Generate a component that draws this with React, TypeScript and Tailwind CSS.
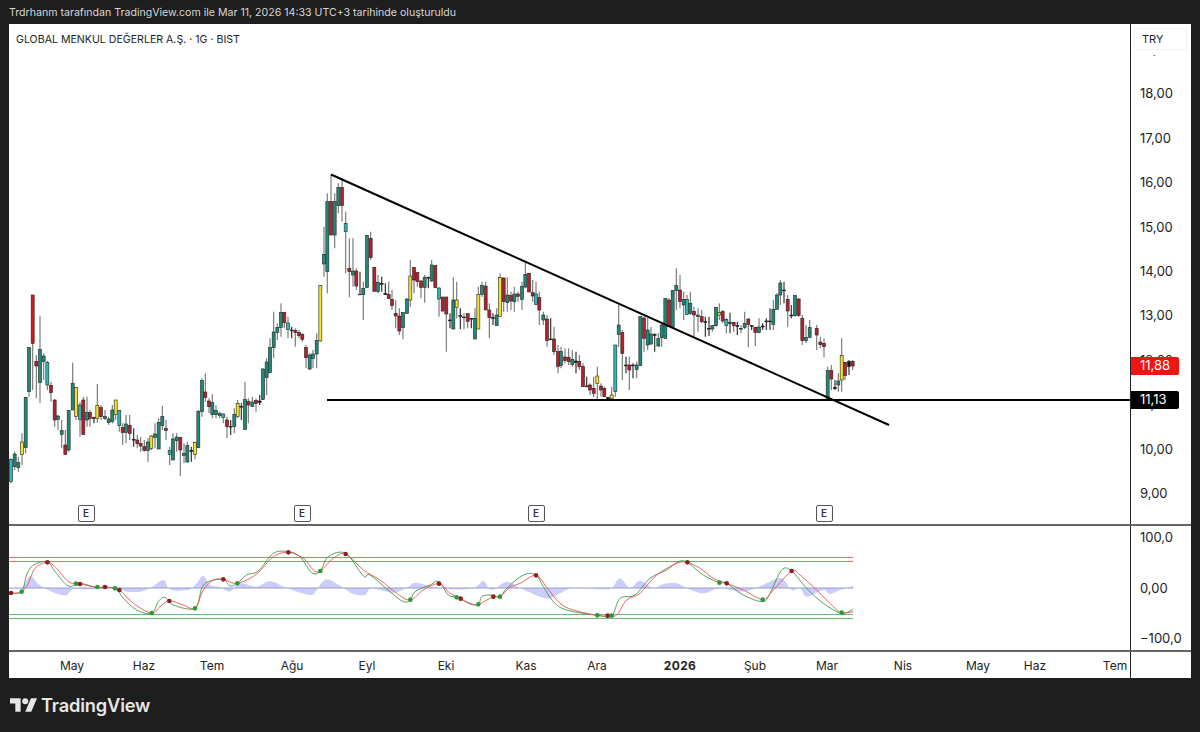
type Candle = [number, number, number, number, number, string]

// candle coords were read off 3x crops, so each group keeps its crop origin
const groupA: Candle[] = [
  [33,565,640,568,635,"c"],[44,545,600,552,590,"g"],[55,560,605,578,593,"g"],[66,490,585,516,553,"y"],[77,380,550,382,533,"g"],
  [87,232,380,233,365,"g"],[98,75,360,75,220,"R"],[109,255,385,274,288,"r"],[120,137,400,238,338,"g"],[131,250,330,258,275,"g"],
  [142,272,360,278,345,"c"],[153,335,395,346,368,"r"],[164,388,470,390,450,"r"],[174,435,480,438,448,"g"],[185,450,535,482,493,"g"],
  [196,480,555,525,553,"r"],[206,420,545,422,540,"g"],[218,278,420,340,420,"g"],[228,350,450,352,440,"y"],[240,395,500,405,448,"c"],
  [250,380,495,390,493,"r"],[261,380,470,428,450,"g"],[270,420,470,428,445,"r"],[282,440,460,443,445,"k"],[292,342,458,406,445,"y"],
  [303,405,450,413,440,"r"],[315,420,450,440,446,"g"],[326,440,465,447,458,"g"],[337,405,460,420,455,"g"],[347,390,450,390,433,"y"],
  [358,420,485,421,467,"c"],[368,460,525,473,487,"r"],[378,435,520,462,487,"g"],[389,435,510,466,490,"r"],[401,475,530,508,510,"k"],
  [412,495,535,510,521,"r"],[422,500,545,521,528,"r"],[433,510,545,530,541,"r"],[444,505,575,516,541,"g"],[454,495,540,498,535,"y"],
  [465,460,535,492,502,"g"],[476,445,535,458,537,"g"],[487,408,480,440,467,"g"],[498,450,510,476,481,"r"],[509,530,585,542,553,"c"],
  [519,490,570,507,570,"g"],[530,490,545,501,512,"g"],[541,500,618,503,540,"r"],[552,520,580,550,556,"g"],[562,515,578,527,576,"g"],
  [574,530,575,541,545,"k"],[585,515,568,518,553,"y"],[595,420,535,425,533,"g"],[606,325,440,332,425,"g"],[616,310,395,366,382,"r"],
  [627,385,430,393,410,"r"],[637,372,445,398,434,"g"],[648,405,445,422,434,"g"],[659,425,445,431,437,"g"],[670,430,460,432,443,"c"],
  [681,440,505,450,470,"r"],[692,450,495,469,471,"k"],[703,415,490,433,469,"g"],[713,390,445,400,440,"y"],[724,400,450,409,411,"k"],
  [735,335,480,389,478,"g"],[745,385,460,395,405,"r"],[757,380,410,396,409,"g"],[768,385,425,391,400,"r"],[779,375,405,393,397,"k"],
  [789,295,390,297,388,"g"],[800,265,375,276,323,"g"],[810,205,310,233,308,"g"],[821,125,265,186,233,"g"],[832,160,210,172,187,"g"],
  [843,100,200,127,172,"g"],[853,125,175,127,158,"r"],[864,140,205,159,178,"c"],[875,170,205,180,182,"k"],[886,175,230,181,188,"r"],
  [897,180,205,187,197,"r"],[907,190,215,193,208,"r"],[918,225,295,233,263,"r"],[929,250,300,255,297,"g"],[939,240,295,252,266,"g"],
  [950,190,295,212,252,"g"],[961,45,215,47,213,"y"],
]

const groupB: Candle[] = [
  [12,170,320,253,282,"g"],[22,70,370,95,305,"g"],[33,15,195,95,195,"r"],[44,70,235,95,195,"g"],[55,40,130,53,107,"g"],
  [66,30,155,53,107,"r"],[77,125,310,160,185,"c"],[88,205,382,295,305,"r"],[99,205,350,303,315,"g"],[109,295,360,303,348,"r"],
  [120,305,370,372,374,"k"],[130,335,450,355,374,"g"],[141,195,355,197,352,"g"],[152,185,270,205,263,"r"],[163,290,360,292,364,"r"],
  [174,315,370,338,364,"g"],[185,320,365,340,343,"k"],[196,340,375,371,374,"k"],[206,335,385,373,386,"r"],[216,360,420,388,407,"r"],
  [227,390,475,430,438,"r"],[238,415,495,438,483,"r"],[249,425,508,428,473,"g"],[261,385,432,387,430,"g"],[271,270,410,318,390,"y"],
  [282,290,370,293,330,"r"],[292,305,350,308,335,"r"],[303,330,385,333,352,"r"],[314,315,398,322,352,"g"],[325,320,355,322,322,"k"],
  [335,270,335,285,333,"g"],[346,285,355,287,353,"r"],[357,352,440,354,387,"c"],[368,380,425,381,423,"r"],[379,380,545,381,432,"r"],
  [390,430,475,450,452,"k"],[400,322,478,390,477,"g"],[410,335,445,390,413,"y"],[421,415,478,437,438,"k"],[432,430,478,441,443,"r"],
  [443,430,475,431,454,"r"],[454,445,475,445,447,"k"],[465,415,507,445,507,"g"],[475,350,478,373,477,"y"],[486,335,380,347,373,"g"],
  [497,335,420,348,420,"r"],[508,400,505,420,443,"r"],[519,430,465,443,445,"k"],[530,415,465,435,467,"g"],[540,310,440,323,440,"y"],
  [551,322,425,324,395,"r"],[562,322,425,375,398,"g"],[573,365,420,377,393,"r"],[583,350,425,372,395,"g"],[594,365,395,372,379,"r"],
  [606,335,420,350,388,"g"],[616,275,355,313,351,"g"],[627,308,365,310,366,"r"],[638,330,395,368,378,"r"],[648,335,405,372,403,"c"],
  [658,365,465,383,420,"r"],[670,425,465,435,450,"g"],[681,435,530,447,512,"r"],[692,445,510,507,509,"k"],[702,470,555,507,545,"r"],
  [714,525,610,545,589,"r"],[723,530,595,545,586,"g"],[735,535,580,561,572,"r"],[746,535,585,562,575,"r"],[757,540,590,568,583,"g"],
  [768,545,610,573,578,"k"],[778,555,600,574,590,"r"],[789,580,650,590,650,"r"],[800,620,650,648,650,"k"],[810,640,675,645,660,"r"],
  [821,620,682,655,670,"r"],[832,590,690,618,640,"y"],[843,640,680,648,660,"r"],[853,650,680,655,680,"r"],[864,680,690,683,688,"k"],
  [875,650,690,675,685,"y"],[886,525,680,525,665,"c"],
]

const groupC: Candle[] = [
  [56,165,290,225,253,"g"],[67,240,390,248,310,"r"],[78,320,370,345,345,"k"],[88,320,420,345,360,"r"],[99,340,385,345,347,"k"],
  [110,335,385,345,358,"g"],[121,200,347,200,347,"g"],[132,200,305,204,265,"r"],[143,205,300,240,285,"g"],[153,230,285,252,282,"g"],
  [164,250,305,254,256,"k"],[175,250,290,266,288,"g"],[185,220,290,225,263,"g"],[196,145,265,145,265,"g"],[207,145,230,150,230,"r"],
  [218,120,235,122,232,"g"],[229,55,180,107,122,"g"],[240,75,175,120,155,"r"],[251,125,210,148,165,"g"],[261,135,195,148,193,"c"],
  [271,125,195,160,190,"g"],[282,170,260,184,195,"r"],[294,175,245,195,200,"g"],[305,180,220,200,215,"r"],[316,200,260,215,217,"k"],
  [327,200,258,235,237,"k"],[337,225,245,227,237,"g"],[348,170,230,173,227,"g"],[358,160,210,187,195,"y"],[368,180,220,185,213,"r"],
  [379,205,250,208,227,"c"],[390,188,250,218,220,"k"],[401,215,245,217,227,"r"],[412,215,255,227,229,"k"],[423,225,250,235,237,"r"],
  [434,185,238,220,232,"g"],[445,205,292,207,223,"r"],[455,225,240,227,229,"k"],[466,230,288,232,247,"r"],[477,205,250,231,247,"g"],
  [488,220,240,228,231,"k"],[499,205,240,213,215,"k"],[510,175,240,213,215,"k"],[520,150,240,178,223,"g"],[531,130,178,135,178,"g"],
  [541,90,165,99,135,"g"],[552,95,160,120,122,"k"],[563,135,230,148,183,"r"],[574,165,205,195,198,"k"],[585,135,200,137,197,"g"],
  [596,145,200,147,197,"r"],[607,195,285,205,272,"r"],[618,225,280,262,272,"g"],[629,210,265,233,262,"g"],[650,225,300,235,255,"r"],
  [661,260,295,276,284,"r"],[672,265,322,280,290,"r"],[683,350,445,362,445,"g"],[694,345,420,362,387,"r"],[705,390,420,412,416,"k"],
  [715,370,425,393,405,"g"],[725,265,425,316,390,"y"],[735,335,390,337,377,"r"],[747,330,375,335,350,"k"],[758,330,360,334,348,"r"],
]

const fills: Record<string, string> = {
  g: "#1f8a78",
  c: "#2bb8b8",
  r: "#b5202a",
  R: "#e01414",
  y: "#f2e42c",
  k: "#111111",
}

function Candles({ data, ox, oy }: { data: Candle[]; ox: number; oy: number }) {
  return (
    <g>
      {data.map(([x, wt, wb, bt, bb, kind]) => {
        const cx = ox + x / 3
        return (
          <g key={x}>
            <line
              x1={cx}
              x2={cx}
              y1={oy + wt / 3}
              y2={oy + wb / 3}
              stroke={kind === "k" ? "#333" : "#7d7d7d"}
              strokeWidth="1.2"
            />
            <rect
              x={cx - 1.5}
              y={oy + bt / 3}
              width="3"
              height={Math.max(Math.abs(bb - bt) / 3, 0.8)}
              fill={fills[kind]}
              stroke="#222"
              strokeWidth="0.6"
            />
          </g>
        )
      })}
    </g>
  )
}

// oscillator points, x/y are 3x crop coords from (0,500)
const redPts = [[30,279],[55,278],[80,260],[105,205],[142,187],[170,205],[205,245],[240,252],[290,262],[315,261],[358,270],[400,310],[455,340],[480,320],[508,303],[550,315],[585,325],[610,270],[640,240],[670,238],[712,250],[770,222],[820,170],[865,157],[910,175],[940,210],[961,213],[1000,175],[1037,162],[1090,210],[1140,240],[1190,280],[1231,300],[1270,270],[1317,251],[1350,280],[1382,296],[1410,312],[1435,313],[1480,290],[1500,290],[1530,262],[1560,250],[1608,226],[1640,262],[1680,310],[1720,330],[1792,346],[1823,347],[1850,345],[1880,300],[1920,280],[1970,225],[2030,190],[2062,187],[2100,205],[2140,235],[2180,250],[2230,270],[2288,298],[2320,270],[2375,213],[2400,225],[2450,270],[2500,320],[2525,338],[2560,335]]
const greenPts = [[30,279],[65,275],[80,225],[100,195],[142,185],[165,215],[205,258],[240,250],[290,262],[345,265],[370,295],[410,330],[455,340],[475,305],[495,292],[520,315],[585,325],[605,265],[625,245],[670,238],[690,258],[712,250],[740,225],[775,213],[820,160],[865,155],[900,170],[935,218],[961,213],[985,170],[1037,160],[1090,228],[1110,225],[1170,275],[1210,305],[1231,300],[1245,275],[1290,255],[1317,245],[1345,285],[1370,292],[1430,315],[1445,290],[1470,285],[1500,290],[1520,265],[1570,225],[1608,225],[1630,260],[1660,305],[1700,330],[1792,346],[1835,347],[1860,295],[1905,285],[1950,235],[2000,210],[2035,185],[2062,187],[2110,225],[2158,248],[2180,250],[2230,285],[2288,305],[2310,280],[2345,210],[2375,213],[2420,265],[2470,310],[2525,340],[2560,327]]
const areaPts = [[30,264],[65,264],[90,228],[115,252],[145,270],[175,283],[200,285],[220,266],[260,268],[345,264],[380,275],[420,275],[450,265],[490,240],[505,265],[530,272],[570,268],[590,250],[610,228],[630,255],[660,262],[690,275],[720,250],[770,260],[810,244],[860,264],[930,285],[950,270],[980,238],[1030,264],[1060,282],[1095,285],[1115,265],[1180,278],[1225,260],[1245,248],[1290,258],[1350,268],[1420,264],[1450,243],[1475,270],[1520,245],[1560,264],[1620,290],[1650,295],[1680,280],[1720,264],[1800,268],[1835,264],[1860,235],[1890,264],[1920,242],[1960,264],[1990,252],[2030,250],[2060,264],[2110,280],[2160,264],[2220,275],[2270,264],[2310,245],[2345,235],[2375,270],[2400,264],[2420,290],[2470,270],[2490,282],[2520,270],[2560,258]]

const redDots = [[33,279],[142,187],[240,252],[315,261],[358,270],[508,303],[670,238],[865,157],[1037,162],[1317,251],[1382,296],[1480,290],[1608,226],[1823,347],[2062,187],[2180,250],[2375,213]]
const greenDots = [[65,275],[228,251],[292,261],[345,265],[455,339],[585,325],[712,250],[961,213],[1231,299],[1370,292],[1435,313],[1500,290],[1792,346],[1835,347],[2158,248],[2288,299],[2525,338]]

const toPage = (p: number[]) => [p[0] / 3, 500 + p[1] / 3]

function smooth(pts: number[][]) {
  const p = pts.map(toPage)
  let d = `M${p[0][0]} ${p[0][1]}`
  for (let i = 0; i < p.length - 1; i++) {
    const a = p[i - 1] || p[i]
    const b = p[i]
    const c = p[i + 1]
    const e = p[i + 2] || c
    d += ` C${b[0] + (c[0] - a[0]) / 6} ${b[1] + (c[1] - a[1]) / 6} ${c[0] - (e[0] - b[0]) / 6} ${c[1] - (e[1] - b[1]) / 6} ${c[0]} ${c[1]}`
  }
  return d
}

const prices = ["19,00", "18,00", "17,00", "16,00", "15,00", "14,00", "13,00", "12,00", "11,00", "10,00", "9,00"]

const ticks = [
  { x: 72, t: "May" },
  { x: 144, t: "Haz" },
  { x: 212, t: "Tem" },
  { x: 292, t: "Ağu" },
  { x: 367, t: "Eyl" },
  { x: 446, t: "Eki" },
  { x: 526, t: "Kas" },
  { x: 597, t: "Ara" },
  { x: 680, t: "2026", bold: true },
  { x: 755, t: "Şub" },
  { x: 827, t: "Mar" },
  { x: 903, t: "Nis" },
  { x: 978, t: "May" },
  { x: 1035, t: "Haz" },
  { x: 1115, t: "Tem" },
]

const earnings = [86, 302, 536, 824]

export default function App() {
  return (
    <div className="w-[1200px] h-[732px] bg-[#1e1e1e] flex flex-col overflow-hidden font-['Inter',sans-serif]">
      {/* Header */}
      <div className="h-[24px] pl-[9px] pt-[1px] flex items-center text-[10.6px] text-[#d6d6d6] whitespace-nowrap">
        Trdrhanm tarafından TradingView.com ile Mar 11, 2026 14:33 UTC+3 tarihinde oluşturuldu
      </div>

      <div className="mx-[9px] h-[654px] bg-white flex flex-col text-[#222222]">
        {/* Price pane */}
        <div className="h-[502px] flex border-b-2 border-[#666666]">
          <div className="w-[1122px] relative border-r border-[#222222]">
            <svg viewBox="9 24 1122 500" className="w-[1122px] h-[500px] block">
              <Candles data={groupA} ox={0} oy={270} />
              <Candles data={groupB} ox={320} oy={170} />
              <Candles data={groupC} ox={600} oy={250} />
              <line x1="331" y1="174.5" x2="889" y2="425" stroke="#000" strokeWidth="2" />
              <line x1="327" y1="400" x2="1131" y2="400" stroke="#000" strokeWidth="2" />
            </svg>
            <div className="absolute left-[7px] top-[9px] text-[10.6px] leading-[14px] text-[#222222] whitespace-nowrap">
              GLOBAL MENKUL DEĞERLER A.Ş. · 1G · BIST
            </div>
            {earnings.map((x) => (
              <div
                key={x}
                className="absolute top-[481px] w-[17px] h-[17px] border border-[#555555] rounded-[2px] bg-white flex items-center justify-center text-[10px] font-semibold text-[#333333]"
                style={{ left: x - 17.5 }}
              >
                E
              </div>
            ))}
          </div>
          <div className="flex-1 relative pt-[3.4px] pl-[9px] text-[13px]">
            {prices.map((p) => (
              <div key={p} className="h-[44.44px] flex items-center">
                {p}
              </div>
            ))}
            <div className="absolute left-0 top-0 w-[59px] h-[31px] bg-white pl-[3px] pt-[4px]">
              <div className="w-[53px] h-[22px] pl-[7px] border border-[#f2f2f2] rounded-[3px] flex items-center text-[11px]">
                TRY
              </div>
            </div>
            <div className="absolute left-0 top-[333px] w-[48px] h-[18px] bg-[#f01414] text-white rounded-r-[2px] pl-[9px] flex items-center">
              11,88
            </div>
            <div className="absolute left-0 top-[367px] w-[48px] h-[18px] bg-black text-white rounded-r-[2px] pl-[9px] flex items-center">
              11,13
            </div>
          </div>
        </div>

        {/* Oscillator pane */}
        <div className="h-[126px] flex border-b-2 border-[#666666]">
          <div className="w-[1122px] border-r border-[#222222]">
            <svg viewBox="9 526 1122 124" className="w-[1122px] h-[124px] block">
              <path
                d={`${smooth(areaPts)} L853 588 L10 588 Z`}
                fill="#b9bcf8"
                fillOpacity="0.75"
              />
              <line x1="9" y1="588" x2="853" y2="588" stroke="#9a9ccf" strokeWidth="1" />
              <line x1="9" y1="557.5" x2="853" y2="557.5" stroke="#f26a6a" strokeWidth="1" />
              <line x1="9" y1="561.5" x2="853" y2="561.5" stroke="#f26a6a" strokeWidth="1" />
              <line x1="9" y1="614.5" x2="853" y2="614.5" stroke="#69b873" strokeWidth="1" />
              <line x1="9" y1="618.5" x2="853" y2="618.5" stroke="#69b873" strokeWidth="1" />
              <path d={smooth(greenPts)} fill="none" stroke="#3d9a4f" strokeWidth="0.9" />
              <path d={smooth(redPts)} fill="none" stroke="#ee5050" strokeWidth="0.9" />
              {redDots.map((p) => (
                <circle key={p[0]} cx={p[0] / 3} cy={500 + p[1] / 3} r="2.3" fill="#8f1d22" />
              ))}
              {greenDots.map((p) => (
                <circle key={p[0]} cx={p[0] / 3} cy={500 + p[1] / 3} r="2.3" fill="#2c9a38" />
              ))}
            </svg>
          </div>
          <div className="flex-1 pt-[3px] pb-[4px] pl-[9px] flex flex-col justify-between text-[13px] leading-[16px]">
            <span>100,0</span>
            <span>0,00</span>
            <span>−100,0</span>
          </div>
        </div>

        {/* Time axis */}
        <div className="flex-1 flex">
          <div className="w-[1122px] relative border-r border-[#222222] text-[12px]">
            {ticks.map((k) => (
              <span
                key={k.x}
                className={`absolute top-[6px] -translate-x-1/2 leading-[15px] ${k.bold ? "font-bold tracking-[0.4px]" : ""}`}
                style={{ left: k.x - 9 }}
              >
                {k.t}
              </span>
            ))}
          </div>
          <div className="flex-1" />
        </div>
      </div>

      {/* Footer logo */}
      <div className="flex-1 pl-[10px] flex items-center gap-[4px] text-[#e6e6e6]">
        <svg viewBox="0 4 35.5 18" className="w-[27px] h-[14px]" fill="currentColor">
          <path d="M14 22H7V11H0V4h14v18zM28 22h-8l7.5-18h8L28 22z" />
          <circle cx="20" cy="8" r="4" />
        </svg>
        <span className="text-[18.3px] font-semibold tracking-[-0.2px] leading-none">TradingView</span>
      </div>
    </div>
  )
}
